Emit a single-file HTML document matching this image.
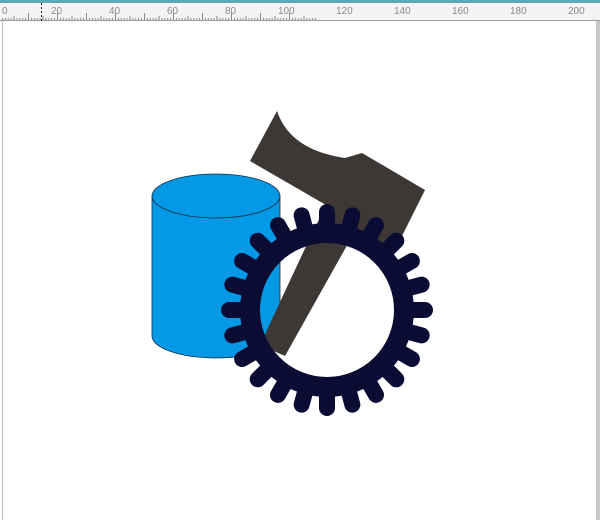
<!DOCTYPE html>
<html><head><style>
body{margin:0;width:600px;height:520px;overflow:hidden;background:#fff;font-family:"Liberation Sans",sans-serif}
</style></head><body>
<svg width="600" height="520" xmlns="http://www.w3.org/2000/svg" style="position:absolute;left:0;top:0">
<rect x="0" y="0" width="600" height="520" fill="#fff"/>
<rect x="0" y="0" width="600" height="3" fill="#5fa9b5"/>
<rect x="0" y="3" width="600" height="18" fill="#f4f4f6"/>
<line x1="0" y1="20.5" x2="600" y2="20.5" stroke="#9a9a9a"/>
<g stroke="#8a8a8a" stroke-width="1" id="ticks"></g>
<g font-size="10" fill="#8a8a8a">
<text x="2" y="14">0</text>
<text x="51" y="14">20</text><text x="109" y="14">40</text><text x="167" y="14">60</text>
<text x="225" y="14">80</text><text x="278" y="14">100</text><text x="336" y="14">120</text>
<text x="394" y="14">140</text><text x="452" y="14">160</text><text x="510" y="14">180</text><text x="568" y="14">200</text>
</g>
<line x1="41.5" y1="3" x2="41.5" y2="21" stroke="#222" stroke-dasharray="2,2"/>
<line x1="2.5" y1="21" x2="2.5" y2="520" stroke="#bbb"/>
<rect x="596" y="21" width="4" height="499" fill="#c8c8c8"/>
<!-- cylinder -->
<path d="M152,196 L152,336 A64,22 0 0 0 280,336 L280,196 Z" fill="#0399e6" stroke="#1a2a40" stroke-width="0.8"/>
<ellipse cx="216" cy="196" rx="64" ry="22" fill="#0399e6" stroke="#1a2a40" stroke-width="0.8"/>
<!-- seven -->
<path d="M277,111 Q290,150 345,158 L362,153 L425,190 L395,250 L350,240 L285,356 L260,345 L308,242 L326,205 L250,161 Z" fill="#3d3835"/>
<!-- gear -->
<g transform="translate(327,310)" stroke="#0b0c33" fill="none">
<circle r="77" stroke-width="20"/>
<g id="teeth" stroke-width="16" stroke-linecap="round"></g>
</g>
</svg>
<script>
var t=document.getElementById('teeth'),s='';
for(var i=0;i<24;i++){var a=i*15*Math.PI/180,c=Math.sin(a),d=-Math.cos(a);
s+='<line x1="'+(82*c)+'" y1="'+(82*d)+'" x2="'+(98*c)+'" y2="'+(98*d)+'"/>';}
t.innerHTML=s;
var k=document.getElementById('ticks'),u='';
for(var j=0;j<110;j++){var x=-1+j*2.9,h=(j%10==0)?7:(j%5==0?4:2);
u+='<line x1="'+(x+0.5)+'" y1="'+(20-h)+'" x2="'+(x+0.5)+'" y2="20"/>';}
k.innerHTML=u;
</script>
</body></html>
